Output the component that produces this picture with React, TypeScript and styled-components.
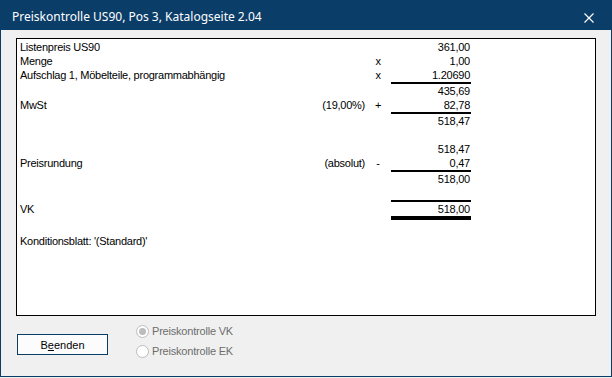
import React from 'react';
import styled, { createGlobalStyle } from 'styled-components';

const GlobalStyle = createGlobalStyle`
    html, body {
        margin: 0;
        padding: 0;
        background: #f0f0f0;
    }
`;

type CalcRow = {
    label?: string;
    note?: string;
    op?: string;
    value?: string;
    rule?: 'thin' | 'thick';
    blank?: boolean;
    wide?: boolean;
};

const rows: CalcRow[] = [
    { label: 'Listenpreis US90', value: '361,00' },
    { label: 'Menge', op: 'x', value: '1,00' },
    { label: 'Aufschlag 1, Möbelteile, programmabhängig', op: 'x', value: '1.20690' },
    { rule: 'thin' },
    { value: '435,69' },
    { label: 'MwSt', note: '(19,00%)', op: '+', value: '82,78' },
    { rule: 'thin' },
    { value: '518,47' },
    { blank: true },
    { value: '518,47' },
    { label: 'Preisrundung', note: '(absolut)', op: '-', value: '0,47' },
    { rule: 'thin' },
    { value: '518,00' },
    { blank: true },
    { rule: 'thin' },
    { label: 'VK', value: '518,00' },
    { rule: 'thick' },
    { blank: true },
    { label: "Konditionsblatt: '(Standard)'", wide: true },
];

const PriceDialog = () => {
    return (
        <Window>
            <TitleBar>
                <Title>Preiskontrolle US90, Pos 3, Katalogseite 2.04</Title>
                <CloseButton>
                    <svg width="10" height="10" viewBox="0 0 10 10">
                        <path d="M0.5 0.5 L9.5 9.5 M9.5 0.5 L0.5 9.5" stroke="#fff" strokeWidth="1.2" />
                    </svg>
                </CloseButton>
            </TitleBar>
            <Body>
                <Sheet>
                    {rows.map((row, i) => {
                        if (row.rule) {
                            return (
                                <RuleRow key={i}>
                                    <Rule $thick={row.rule === 'thick'} />
                                </RuleRow>
                            );
                        }
                        if (row.blank) return <BlankRow key={i} />;
                        if (row.wide) {
                            return (
                                <LineRow key={i}>
                                    <WideCell>{row.label}</WideCell>
                                </LineRow>
                            );
                        }
                        return (
                            <LineRow key={i}>
                                <LabelCell>{row.label}</LabelCell>
                                <NoteCell>{row.note}</NoteCell>
                                <OpCell>{row.op}</OpCell>
                                <ValueCell>{row.value}</ValueCell>
                            </LineRow>
                        );
                    })}
                </Sheet>
                <Footer>
                    <ExitButton>
                        B<u>e</u>enden
                    </ExitButton>
                    <RadioGroup>
                        <RadioRow>
                            <RadioCircle $checked />
                            <RadioLabel>Preiskontrolle VK</RadioLabel>
                        </RadioRow>
                        <RadioRow>
                            <RadioCircle />
                            <RadioLabel>Preiskontrolle EK</RadioLabel>
                        </RadioRow>
                    </RadioGroup>
                </Footer>
            </Body>
        </Window>
    );
};

const Window = styled.div`
    width: 612px;
    height: 377px;
    box-sizing: border-box;
    border: 1px solid #0b3d69;
    border-top: none;
    background: #f0f0f0;
    display: flex;
    flex-direction: column;
    font-family: "Liberation Sans", Arial, sans-serif;
`;

const TitleBar = styled.div`
    height: 30px;
    margin: 0 -1px;
    background: #0b3d69;
    display: flex;
    align-items: flex-start;
    justify-content: space-between;
    padding: 9px 0 0 12px;
    box-sizing: border-box;
`;

const Title = styled.div`
    font-family: "Noto Sans", "Open Sans", sans-serif;
    font-size: 12px;
    line-height: 16px;
    color: #ffffff;
`;

const CloseButton = styled.div`
    width: 46px;
    display: flex;
    justify-content: center;
    padding-top: 4px;
`;

const Body = styled.div`
    flex: 1;
    display: flex;
    flex-direction: column;
    padding: 8px 15px 0 15px;
`;

const Sheet = styled.div`
    height: 278px;
    box-sizing: border-box;
    border: 1px solid #000;
    background: #fff;
    padding: 1px 0 0 3px;
    font-size: 11px;
    letter-spacing: -0.25px;
    color: #000;
`;

const LineRow = styled.div`
    display: grid;
    grid-template-columns: 302px 43px 26px 80px 1fr;
    height: 14px;
    line-height: 14px;
    white-space: nowrap;
`;

const BlankRow = styled.div`
    height: 14px;
`;

const RuleRow = styled.div`
    display: grid;
    grid-template-columns: 302px 43px 26px 80px 1fr;
`;

const Rule = styled.div<{ $thick?: boolean }>`
    grid-column: 4;
    height: ${(p) => (p.$thick ? '4px' : '2px')};
    background: #000;
`;

const LabelCell = styled.div`
    grid-column: 1;
`;

const NoteCell = styled.div`
    grid-column: 2;
    text-align: right;
`;

const OpCell = styled.div`
    grid-column: 3;
    text-align: center;
`;

const ValueCell = styled.div`
    grid-column: 4;
    text-align: right;
    padding-right: 1px;
`;

const WideCell = styled.div`
    grid-column: 1 / -1;
`;

const Footer = styled.div`
    display: flex;
    align-items: flex-start;
    padding: 5px 0 0 1px;
    gap: 28px;
`;

const ExitButton = styled.button`
    margin-top: 13px;
    width: 91px;
    height: 21px;
    box-sizing: border-box;
    border: 1px solid #0b3d69;
    background: #fcfcfc;
    font-family: "Liberation Sans", Arial, sans-serif;
    font-size: 11px;
    color: #000;
    padding: 0;
    u {
        text-decoration-thickness: 1px;
    }
`;

const RadioGroup = styled.div`
    display: flex;
    flex-direction: column;
`;

const RadioRow = styled.div`
    height: 20px;
    display: flex;
    align-items: center;
    gap: 3px;
`;

const RadioCircle = styled.span<{ $checked?: boolean }>`
    width: 13px;
    height: 13px;
    box-sizing: border-box;
    border: 1px solid #bcbcbc;
    border-radius: 50%;
    background: #fff;
    display: flex;
    align-items: center;
    justify-content: center;
    &::after {
        content: '';
        width: 7px;
        height: 7px;
        border-radius: 50%;
        background: ${(p) => (p.$checked ? '#bcbcbc' : 'transparent')};
    }
`;

const RadioLabel = styled.span`
    font-size: 11px;
    letter-spacing: -0.2px;
    color: #6d6d6d;
`;

const App = () => (
    <>
        <GlobalStyle />
        <PriceDialog />
    </>
);

export default App;
